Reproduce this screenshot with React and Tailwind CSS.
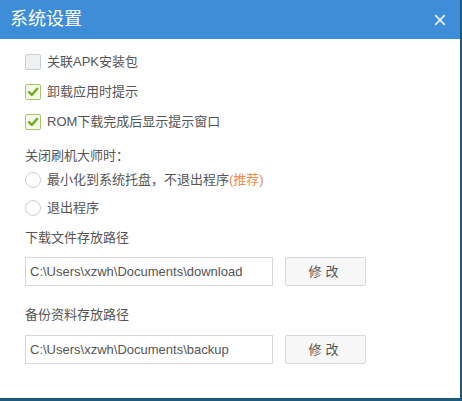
import React from 'react';

const font = { fontFamily: '"Liberation Sans", "Noto Sans CJK SC", sans-serif' };

const Check = ({ checked, label }) => (
  <div className="flex items-center h-[30px]">
    <div
      className={
        'w-[16px] h-[16px] rounded-[2px] border flex items-center justify-center ' +
        (checked ? 'border-[#a6c86a] bg-[#f4f9ea]' : 'border-[#c9ced4] bg-[#eef1f4]')
      }
    >
      {checked && (
        <svg width="12" height="12" viewBox="0 0 12 12">
          <path d="M2 6.2 L4.8 9 L10.2 2.8" fill="none" stroke="#6fae1e" strokeWidth="2.4" strokeLinecap="round" strokeLinejoin="round" />
        </svg>
      )}
    </div>
    <span className="ml-[6px] text-[13px] text-[#555]">{label}</span>
  </div>
);

const Radio = ({ children }) => (
  <div className="flex items-center h-[28px]">
    <div className="w-[16px] h-[16px] rounded-full border border-[#c9ced4] bg-white" />
    <span className="ml-[6px] text-[13px] text-[#555]">{children}</span>
  </div>
);

const PathRow = ({ value }) => (
  <div className="flex items-center">
    <div className="w-[248px] h-[29px] border border-[#d5d8dc] bg-white flex items-center px-[4px] text-[13px] text-[#555]">
      {value}
    </div>
    <button className="ml-[12px] w-[81px] h-[29px] border border-[#d5d8dc] rounded-[2px] bg-[#f7f7f7] text-[13px] text-[#555] tracking-[4px]">
      修改
    </button>
  </div>
);

export default function App() {
  return (
    <div className="w-[462px] h-[401px] bg-[#1d5a7a] overflow-hidden" style={font}>
      <div className="w-[460px] h-[398px] bg-white flex flex-col">
        {/* title bar */}
        <div className="h-[39px] bg-[#3d8dd8] flex items-center justify-between pl-[10px] pr-[14px]">
          <span className="text-[18px] text-white">系统设置</span>
          <svg width="12" height="12" viewBox="0 0 12 12">
            <path d="M1.2 1.2 L10.8 10.8 M10.8 1.2 L1.2 10.8" stroke="#e3eefa" strokeWidth="1.8" />
          </svg>
        </div>

        <div className="pl-[25px] pt-[8px] flex flex-col">
          <Check label="关联APK安装包" />
          <Check checked label="卸载应用时提示" />
          <Check checked label="ROM下载完成后显示提示窗口" />

          <div className="mt-[9px] text-[13px] text-[#555] h-[20px] flex items-center">关闭刷机大师时：</div>
          <div className="flex flex-col">
            <Radio>
              最小化到系统托盘，不退出程序<span className="text-[#f08a4b]">(推荐)</span>
            </Radio>
            <Radio>退出程序</Radio>
          </div>

          <div className="mt-[6px] text-[13px] text-[#555] h-[20px] flex items-center">下载文件存放路径</div>
          <div className="mt-[9px]">
            <PathRow value="C:\Users\xzwh\Documents\download" />
          </div>

          <div className="mt-[19px] text-[13px] text-[#555] h-[20px] flex items-center">备份资料存放路径</div>
          <div className="mt-[10px]">
            <PathRow value="C:\Users\xzwh\Documents\backup" />
          </div>
        </div>
      </div>
    </div>
  );
}
